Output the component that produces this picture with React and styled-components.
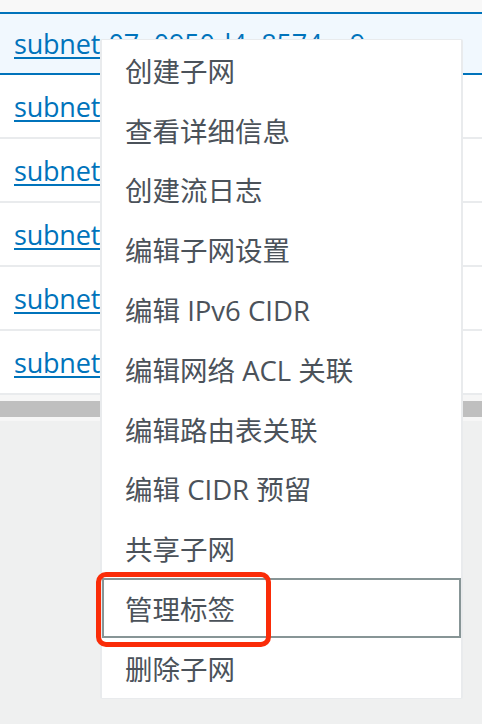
import React from "react";
import styled, { createGlobalStyle } from "styled-components";

const Global = createGlobalStyle`
  html, body { margin: 0; padding: 0; }
  body {
    background: #eff0f0;
    font-family: "Open Sans", "Noto Sans CJK SC", sans-serif;
    overflow: hidden;
  }
`;

const Page = styled.div`
  position: relative;
  width: 482px;
  height: 724px;
  display: flex;
  flex-direction: column;
  background: #eff0f0;
`;

const TopStrip = styled.div`
  height: 12px;
  background: #f8f8f8;
`;

const Table = styled.div`
  display: flex;
  flex-direction: column;
  background: #ffffff;
`;

const Row = styled.div`
  display: flex;
  align-items: center;
  padding-left: 14px;
  box-sizing: border-box;
  height: ${(p) => (p.$selected ? "63px" : "64px")};
  background: ${(p) => (p.$selected ? "#f1f8fe" : "#ffffff")};
  border-top: ${(p) => (p.$selected ? "2px solid #0073bb" : "none")};
  border-bottom: 2px solid ${(p) => (p.$selected ? "#0073bb" : "#e9ebed")};
  white-space: nowrap;
  overflow: hidden;
`;

const SubnetLink = styled.a`
  font-family: "Open Sans", sans-serif;
  font-size: 27px;
  color: #0073bb;
  text-decoration: underline;
  text-decoration-thickness: 2px;
  text-underline-offset: 3px;
  letter-spacing: -0.2px;
`;

const ScrollTrack = styled.div`
  padding: 6px 0 4px;
  background: #f6f6f6;
`;

const ScrollThumb = styled.div`
  height: 16px;
  background: #bfbfbf;
`;

const Menu = styled.ul`
  position: absolute;
  left: 100px;
  top: 39px;
  width: 363px;
  margin: 0;
  padding: 0;
  list-style: none;
  box-sizing: border-box;
  background: #ffffff;
  border: 2px solid #e9ebed;
  border-top-width: 1px;
  border-bottom-width: 1px;
  border-radius: 2px;
  display: flex;
  flex-direction: column;
`;

const Item = styled.li`
  height: 59.8px;
  box-sizing: border-box;
  display: flex;
  align-items: center;
  padding-left: ${(p) => (p.$focused ? "21px" : "23px")};
  border: ${(p) => (p.$focused ? "2px solid #879596" : "none")};
  font-family: "Open Sans", "Noto Sans CJK SC", sans-serif;
  font-size: 27.5px;
  color: #4b525a;
  white-space: nowrap;
`;

const Annotation = styled.div`
  position: absolute;
  left: 96px;
  top: 572px;
  width: 175px;
  height: 75px;
  box-sizing: border-box;
  border: 5px solid #fa2c08;
  border-radius: 10px;
  pointer-events: none;
`;

const items = [
  "创建子网",
  "查看详细信息",
  "创建流日志",
  "编辑子网设置",
  "编辑 IPv6 CIDR",
  "编辑网络 ACL 关联",
  "编辑路由表关联",
  "编辑 CIDR 预留",
  "共享子网",
  "管理标签",
  "删除子网",
];

const rows = [
  { id: "subnet-07a0950d4e8574ac9", selected: true },
  { id: "subnet-0b1c2e3a4f5d6e7a8" },
  { id: "subnet-0c2d3e4f5a6b7c8d9" },
  { id: "subnet-0d3e4f5a6b7c8d9e0" },
  { id: "subnet-0e4f5a6b7c8d9e0f1" },
  { id: "subnet-0f5a6b7c8d9e0f1a2" },
];

export default function App() {
  return (
    <>
      <Global />
      <Page>
        <TopStrip />
        <Table>
          {rows.map((r) => (
            <Row key={r.id} $selected={r.selected}>
              <SubnetLink href="#">{r.id}</SubnetLink>
            </Row>
          ))}
        </Table>
        <ScrollTrack>
          <ScrollThumb />
        </ScrollTrack>
        <Menu>
          {items.map((t) => (
            <Item key={t} $focused={t === "管理标签"}>
              {t}
            </Item>
          ))}
        </Menu>
        <Annotation />
      </Page>
    </>
  );
}
